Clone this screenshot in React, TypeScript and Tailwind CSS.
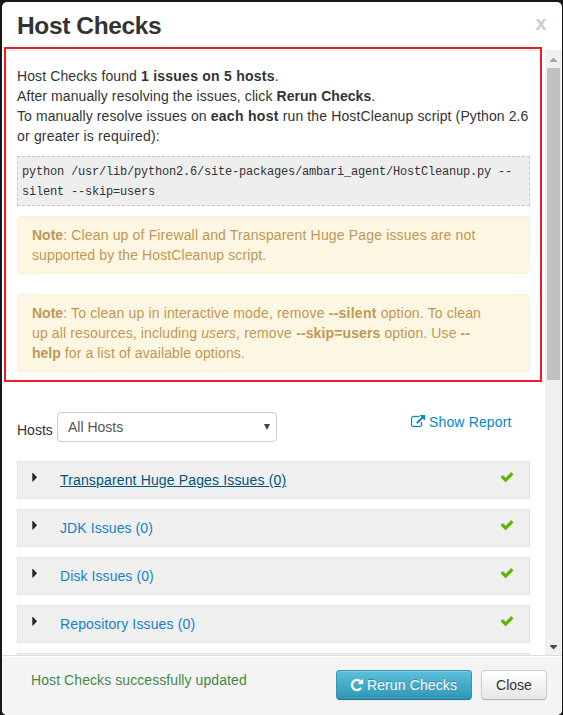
import React from "react";

const ISSUES = [
  { label: "Transparent Huge Pages Issues (0)", style: "tracking-[0.15px] text-[#005580] underline" },
  { label: "JDK Issues (0)", style: "tracking-[0.08px] text-[#1482c8]" },
  { label: "Disk Issues (0)", style: "tracking-[0.08px] text-[#1482c8]" },
  { label: "Repository Issues (0)", style: "tracking-[0.14px] text-[#1482c8]" },
];

const PATHS = {
  external:
    "M1408 928v320q0 119-84.5 203.5t-203.5 84.5h-832q-119 0-203.5-84.5t-84.5-203.5v-832q0-119 84.5-203.5t203.5-84.5h704q14 0 23 9t9 23v64q0 14-9 23t-23 9h-704q-66 0-113 47t-47 113v832q0 66 47 113t113 47h832q66 0 113-47t47-113v-320q0-14 9-23t23-9h64q14 0 23 9t9 23zm384-864v512q0 26-19 45t-45 19-45-19l-176-176-652 652q-10 10-23 10t-23-10l-114-114q-10-10-10-23t10-23l652-652-176-176q-19-19-19-45t19-45 45-19h512q26 0 45 19t19 45z",
  repeat:
    "M1664 256v448q0 26-19 45t-45 19h-448q-42 0-59-40-17-39 14-69l138-138q-148-137-349-137-104 0-198.5 40.5t-163.5 109.5-109.5 163.5-40.5 198.5 40.5 198.5 109.5 163.5 163.5 109.5 198.5 40.5q119 0 225-52t179-147q7-10 23-12 15 0 25 9l137 138q9 8 9.5 20.5t-7.5 22.5q-109 132-264 204.5t-327 72.5q-156 0-298-61t-245-164-164-245-61-298 61-298 164-245 245-164 298-61q147 0 284.5 55.5t244.5 156.5l130-129q29-31 70-14 39 17 39 59z",
  check:
    "M1671 566q0 40-28 68l-724 724-136 136q-28 28-68 28t-68-28l-136-136-362-362q-28-28-28-68t28-68l136-136q28-28 68-28t68 28l294 295 656-657q28-28 68-28t68 28l136 136q28 28 28 68z",
};

function Icon({ name, className }: { name: keyof typeof PATHS; className: string }) {
  return (
    <svg viewBox="0 0 1792 1792" fill="currentColor" stroke="currentColor" strokeWidth={40} className={className}>
      <path d={PATHS[name]} />
    </svg>
  );
}

function Note({ children }: { children: React.ReactNode }) {
  return (
    <div className="mb-5 rounded border border-[#fbeed5] bg-[#fcf6e2] py-2 pr-5 pl-3.5 whitespace-nowrap text-[#c09853]">
      <b>Note</b>
      {children}
    </div>
  );
}

function IssueRow({ label, style }: { label: string; style: string }) {
  return (
    <div className="mb-2.5 flex h-[38px] shrink-0 items-start border border-[#e3e3e3] bg-[#efefef] py-2 pr-[15px] pl-3.5">
      <svg viewBox="0 0 5 9" className="mt-[3px] h-[9px] w-[5px] fill-[#222]">
        <path d="M0.300 0H1l4 4.300L1 8.600H0.300z" />
      </svg>
      <span className={`ml-[23px] ${style}`}>{label}</span>
      <Icon name="check" className="ml-auto h-3.5 w-3.5 text-[#5ab400]" />
    </div>
  );
}

function Scrollbar() {
  return (
    <div className="flex w-[17px] shrink-0 flex-col items-center bg-[#f0f0f0]">
      <svg viewBox="0 0 17 17" className="h-[17px] w-[17px] shrink-0 fill-[#a3a3a3]">
        <path d="M5 11h7V10L8.500 6.500 5 10z" />
      </svg>
      <div className="h-[312px] w-[13px] bg-[#c1c1c1]" />
      <svg viewBox="0 0 17 17" className="mt-auto h-[17px] w-[17px] shrink-0 fill-[#505050]">
        <path d="M5 7h7v1l-3.500 3.500L5 8z" />
      </svg>
    </div>
  );
}

export default function App() {
  return (
    <div className="h-[715px] w-[563px] bg-[#18181b] pt-0.5 pl-0.5 font-['Liberation_Sans',Arial,sans-serif] text-sm leading-5 text-[#333]">
      <div className="relative flex h-[713px] w-[560px] flex-col overflow-hidden rounded-[5px] bg-white">
        <header className="flex h-[49px] shrink-0 items-start justify-between border-b border-[#eee] pt-[9px] pr-[15.5px] pl-[15px]">
          <h3 className="text-[24.5px] leading-[30px] font-bold tracking-[-0.38px]">Host Checks</h3>
          <span className="pt-0.5 text-xl leading-5 font-bold text-[#ccc]">x</span>
        </header>

        <div className="flex h-[604px] shrink-0">
          <main className="flex min-w-0 flex-1 flex-col overflow-hidden p-[15px]">
            <p className="tracking-[0.1px] whitespace-nowrap">
              Host Checks found <b className="tracking-[0.24px]">1 issues on 5 hosts</b>.
              <br />
              After manually resolving the issues, click <b className="tracking-[0.05px]">Rerun Checks</b>.
              <br />
              To manually resolve issues on <b className="tracking-[0.3px]">each host</b>{" "}
              <span className="tracking-[0.12px]">run the HostCleanup script (Python 2.6</span>
              <br />
              <span className="tracking-[0.18px]">or greater is required):</span>
            </p>
            <div className="mt-2.5 mb-2.5 border border-dashed border-[#c8c8c8] bg-[#eee] px-1 pt-[5px] pb-[3px] font-['Liberation_Mono',monospace] text-xs leading-5 tracking-[-0.2px] text-[#333]">
              python /usr/lib/python2.6/site-packages/ambari_agent/HostCleanup.py --
              <br />
              silent --skip=users
            </div>
            <Note>
              <span className="tracking-[0.16px]">: Clean up of Firewall and Transparent Huge Page issues are not</span>
              <br />
              <span className="tracking-[0.11px]">supported by the HostCleanup script.</span>
            </Note>
            <Note>
              <span className="tracking-[0.16px]">
                : To clean up in interactive mode, remove <b className="tracking-[0.25px]">--silent</b> option. To clean
              </span>
              <br />
              <span className="tracking-[0.12px]">
                up all resources, including <i>users</i>
                <span className="tracking-[0.2px]">, remove </span>
                <b>--skip=users</b> option. Use <b>--</b>
              </span>
              <br />
              <b>help</b>
              <span className="tracking-[0.11px]"> for a list of available options.</span>
            </Note>

            <div className="mt-5 mb-[19px] flex h-[30px] shrink-0 items-start">
              <label className="mt-2 w-10">Hosts</label>
              <div className="flex h-[30px] w-[220px] items-center justify-between rounded border border-[#ccc] pr-1.5 pl-2.5 text-[#555]">
                All Hosts
                <svg viewBox="0 0 6 6" className="h-1.5 w-1.5 fill-[#444]">
                  <path d="M0 0h6L3 6z" />
                </svg>
              </div>
              <a className="ml-auto flex items-center pr-[18.5px] tracking-[0.14px] text-[#0088cc]">
                <Icon name="external" className="mr-1 h-3.5 w-3.5" />
                Show Report
              </a>
            </div>

            {ISSUES.map((issue) => (
              <IssueRow key={issue.label} {...issue} />
            ))}
            {/* Top edge of the next section, below the fold */}
            <div className="h-[38px] shrink-0 border border-[#e3e3e3] bg-[#efefef]" />
          </main>
          <Scrollbar />
        </div>

        <footer className="flex flex-1 items-start border-t border-[#ddd] bg-[#f4f4f4] pt-3.5 pr-[15px] pl-[29px] shadow-[inset_0_1px_0_#fff]">
          <span className="tracking-[0.08px] text-[#468847]">Host Checks successfully updated</span>
          <button className="ml-auto flex h-[30px] w-[136px] items-center justify-center rounded border border-[#2f96b4] border-b-[#24748c] bg-linear-to-b from-[#5bc0de] to-[#2f96b4] pr-px tracking-[0.12px] text-white shadow-[inset_0_1px_0_rgba(255,255,255,.2),0_1px_2px_rgba(0,0,0,.05)] text-shadow-[0_-1px_0_rgba(0,0,0,0.25)]">
            <Icon name="repeat" className="mr-[3px] h-3.5 w-3.5" />
            Rerun Checks
          </button>
          <button className="ml-[9px] h-[30px] w-[66px] rounded border border-[#ccc] border-b-[#b3b3b3] bg-linear-to-b from-white to-[#e6e6e6] shadow-[inset_0_1px_0_rgba(255,255,255,.2),0_1px_2px_rgba(0,0,0,.05)]">
            Close
          </button>
        </footer>

        {/* Highlight frame drawn over the instructions */}
        <div className="pointer-events-none absolute top-[45px] left-0.5 h-[335px] w-[538px] border-2 border-[#ed1c24]" />
      </div>
    </div>
  );
}
